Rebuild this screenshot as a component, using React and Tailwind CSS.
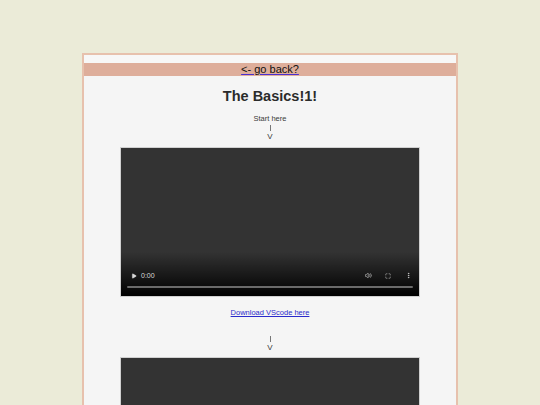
import { Play, Volume2, Maximize, MoreVertical } from 'lucide-react';

function FakeVideo({ showControls = true }) {
  return (
    <div className="w-[300px] h-[150px] mx-auto border border-[#d0d0d0] bg-[#333333] flex flex-col justify-end relative overflow-hidden">
      {showControls && (
        <div className="h-[44px] bg-gradient-to-b from-transparent to-black flex flex-col justify-end px-[6px] pb-[8px]">
          <div className="flex items-center text-[#d8d8d8] text-[7px] leading-none">
            <Play className="w-[6px] h-[6px] ml-[4px] fill-current" strokeWidth={1} />
            <span className="ml-[4px]">0:00</span>
            <div className="flex-1" />
            <Volume2 className="w-[7px] h-[7px]" strokeWidth={2} />
            <Maximize className="w-[6px] h-[6px] ml-[13px]" strokeWidth={2} />
            <MoreVertical className="w-[7px] h-[7px] ml-[14px] mr-[1px]" strokeWidth={2.5} />
          </div>
          <div className="h-[2px] bg-[#6a6a6a] mt-[7px] rounded-full" />
        </div>
      )}
    </div>
  );
}

function Arrow() {
  return (
    <div className="flex flex-col items-center text-[8px] leading-[9px] text-[#3a3a3a]">
      <div className="h-[9px] flex items-center">
        <div className="w-px h-[6px] bg-[#777]" />
      </div>
      <span>V</span>
    </div>
  );
}

export default function App() {
  return (
    <div className="min-h-[405px] bg-[#ebebd8] pt-[53px] font-['Liberation_Sans',sans-serif]">
      <div className="w-[376px] mx-auto border-2 border-[#e7c1ad] bg-[#f5f5f5] h-[360px] overflow-hidden">
        <div className="h-[8px] bg-[#f7f7f7]" />
        <div className="h-[13px] bg-[#deae9b] flex items-center justify-center">
          <a href="#" className="text-[11px] leading-none text-[#111] underline decoration-[#4b2fd0]">
            &lt;- go back?
          </a>
        </div>
        <h1 className="text-center font-bold text-[14.5px] text-[#2b2b2b] mt-[11px] leading-[18px]">The Basics!1!</h1>
        <div className="text-center text-[7.5px] leading-[9px] text-[#3a3a3a] mt-[9px]">Start here</div>
        <Arrow />
        <div className="mt-[6px]">
          <FakeVideo />
        </div>
        <div className="text-center mt-[5px] leading-none">
          <a href="#" className="text-[7.5px] leading-none text-[#2a2acb] underline">Download VScode here</a>
        </div>
        <div className="mt-[16px]">
          <Arrow />
        </div>
        <div className="mt-[5px]">
          <FakeVideo showControls={false} />
        </div>
      </div>
    </div>
  );
}
